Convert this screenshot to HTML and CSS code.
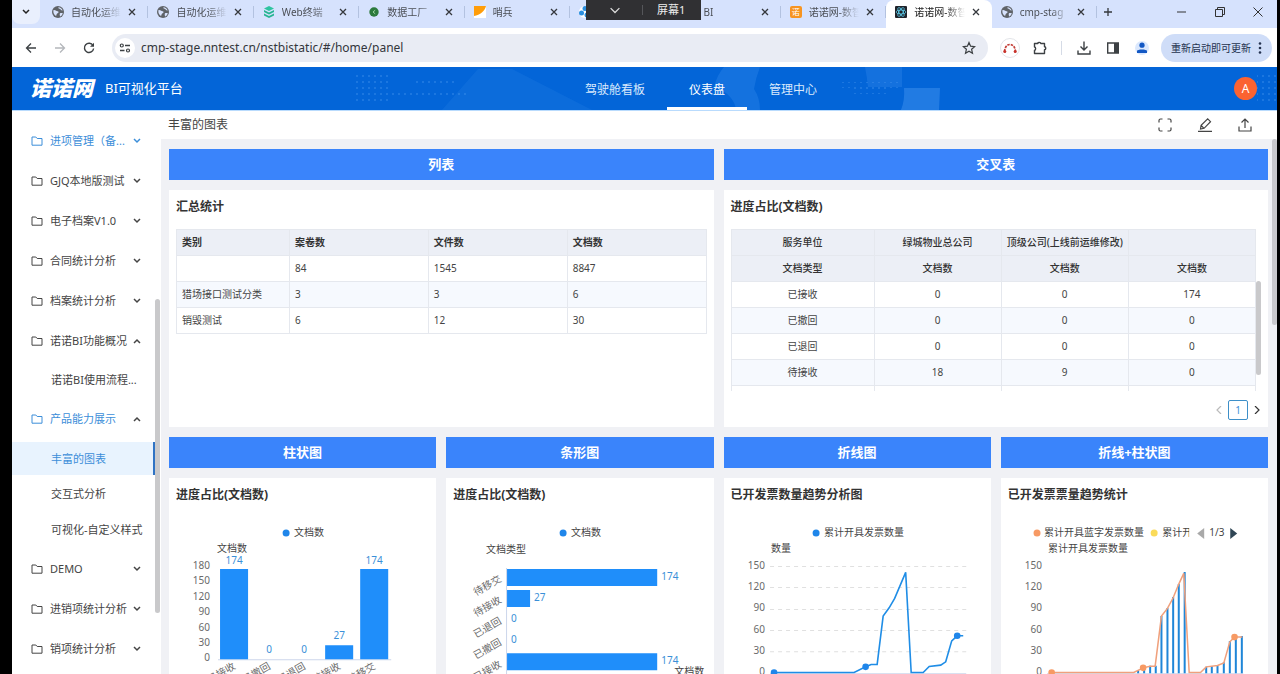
FILE: index.html
```html
<!DOCTYPE html>
<html lang="zh-CN">
<head>
<meta charset="utf-8">
<title>诺诺网-数智BI</title>
<link rel="stylesheet" href="styles.css">
</head>
<body>
<svg class="sprite" aria-hidden="true">
  <symbol id="globe" viewBox="0 0 12 12"><circle cx="6" cy="6" r="6" fill="#5f6368"/><path d="M1.4 4.2C3 3.6 4 5 5.6 5.2c1.4.2 1.2 1.6 0 2-1.200.4-.8 1.600-1.600 2.800C2.200 9 1 7 1.400 4.200zM6.500 1.200c-.6 1 .4 1.400 1.400 1.600 1 .3.6 1.800 2.800 1.700C10 2.600 8.400 1.300 6.500 1.200zM8 7.200c1-.6 2.200-.2 2.800 0-.4 1.600-1.400 2.800-2.600 3.400-.4-1-.8-2.800-.2-3.400z" fill="#d7e2fc"/></symbol>
  <symbol id="close" viewBox="0 0 8 8"><path d="M1 1l6 6M7 1L1 7" stroke="#35383d" stroke-width="1.300" fill="none"/></symbol>
  <symbol id="folder" viewBox="0 0 12 12"><path d="M1 2h3.800l1.400 1.500H11v6.700H1z" fill="none" stroke="currentColor" stroke-linejoin="round"/></symbol>
  <symbol id="down" viewBox="0 0 8 8"><path d="M1 2l3 3 3-3" fill="none" stroke="currentColor" stroke-width="1.500"/></symbol>
  <symbol id="up" viewBox="0 0 8 8"><path d="M1 6l3-3 3 3" fill="none" stroke="currentColor" stroke-width="1.500"/></symbol>
</svg>
<div class="window">
  <div class="tabstrip">
    <button class="tab-search" aria-label="搜索标签页"><svg width="8" height="8"><use href="#down"/></svg></button>
    <div class="tabs">
      <div class="tab"><svg class="fav"><use href="#globe"/></svg><span>自动化运维</span><button aria-label="关闭"><svg width="8" height="8"><use href="#close"/></svg></button></div>
      <div class="tab"><svg class="fav"><use href="#globe"/></svg><span>自动化运维</span><button aria-label="关闭"><svg width="8" height="8"><use href="#close"/></svg></button></div>
      <div class="tab"><svg class="fav" viewBox="0 0 12 12"><path d="M6 0l5 2.500L6 5 1 2.500z" fill="#2fc4a0"/><path d="M1 4l5 2.500L11 4v2L6 8.500 1 6zM1 7.500L6 10l5-2.500v2L6 12 1 9.500z" fill="#27b592"/></svg><span>Web终端</span><button aria-label="关闭"><svg width="8" height="8"><use href="#close"/></svg></button></div>
      <div class="tab"><svg class="fav" viewBox="0 0 12 12"><circle cx="6" cy="6" r="4.700" fill="#2c7a3c"/><path d="M7.200 4.200L5 6l2.200 1.800" stroke="#9bd39f" fill="none"/></svg><span>数据工厂</span><button aria-label="关闭"><svg width="8" height="8"><use href="#close"/></svg></button></div>
      <div class="tab"><svg class="fav" viewBox="0 0 12 12"><path d="M0 0h12v12H0z" fill="#fff"/><path d="M0 0h12C11 5 6 9 0 10z" fill="#ff9d0a"/></svg><span>哨兵</span><button aria-label="关闭"><svg width="8" height="8"><use href="#close"/></svg></button></div>
      <div class="tab"><svg class="fav" viewBox="0 0 12 12"><circle cx="6" cy="6" r="6" fill="#fff"/><circle cx="6" cy="2.500" r="2.500" fill="#2a8fe0"/><circle cx="2.500" cy="7" r="2.500" fill="#2a8fe0"/><circle cx="8" cy="9" r="2.500" fill="#2a8fe0"/></svg><span></span><button aria-label="关闭"><svg width="8" height="8"><use href="#close"/></svg></button></div>
      <div class="tab"><svg class="fav"><use href="#globe"/></svg><span>BI</span><button aria-label="关闭"><svg width="8" height="8"><use href="#close"/></svg></button></div>
      <div class="tab"><i class="fav fav-nuo">诺</i><span>诺诺网-数智</span><button aria-label="关闭"><svg width="8" height="8"><use href="#close"/></svg></button></div>
      <div class="tab active"><svg class="fav" viewBox="0 0 12 12"><rect width="12" height="12" rx="1" fill="#20232a"/><g fill="none" stroke="#61dafb" stroke-width=".7"><ellipse cx="6" cy="6" rx="5" ry="2"/><ellipse cx="6" cy="6" rx="5" ry="2" transform="rotate(60 6 6)"/><ellipse cx="6" cy="6" rx="5" ry="2" transform="rotate(120 6 6)"/></g></svg><span>诺诺网-数智</span><button aria-label="关闭"><svg width="8" height="8"><use href="#close"/></svg></button></div>
      <div class="tab"><svg class="fav"><use href="#globe"/></svg><span>cmp-stag</span><button aria-label="关闭"><svg width="8" height="8"><use href="#close"/></svg></button></div>
    </div>
    <button class="new-tab" aria-label="新标签页"><svg width="10" height="10" viewBox="0 0 10 10"><path d="M5 1v8M1 5h8" stroke="#35383d" stroke-width="1.300"/></svg></button>
    <div class="win-controls">
      <button aria-label="最小化"><svg width="10" height="10" viewBox="0 0 10 10"><path d="M0 5h9" stroke="#333"/></svg></button>
      <button aria-label="还原"><svg width="10" height="10" viewBox="0 0 10 10"><path d="M.5 2.500h7v7h-7zM2.500 2V.5h7v7H8" fill="none" stroke="#333"/></svg></button>
      <button aria-label="关闭窗口"><svg width="10" height="10" viewBox="0 0 10 10"><path d="M.5.5l9 9M9.500.5l-9 9" stroke="#333"/></svg></button>
    </div>
    <div class="screen-bar"><svg width="10" height="10" viewBox="0 0 8 8"><path d="M.5 2.500L4 6l3.500-3.500" fill="none" stroke="#ddd"/></svg><i></i><span>屏幕1</span></div>
  </div>

  <div class="toolbar">
    <button class="tool" aria-label="后退"><svg viewBox="0 0 12 12"><path d="M11 6H1.500M6 1.500L1.500 6 6 10.500" fill="none" stroke="#3c4043" stroke-width="1.300"/></svg></button>
    <button class="tool" aria-label="前进"><svg viewBox="0 0 12 12"><path d="M1 6h9.500M6 1.500L10.500 6 6 10.500" fill="none" stroke="#b4b7bb" stroke-width="1.300"/></svg></button>
    <button class="tool" aria-label="刷新"><svg viewBox="0 0 12 12"><path d="M10 3.500A4.600 4.600 0 1 0 10.600 6.500" fill="none" stroke="#3c4043" stroke-width="1.400"/><path d="M11 .8v4H7z" fill="#3c4043"/></svg></button>
    <div class="omnibox">
      <span class="site-info"><svg width="12" height="12" viewBox="0 0 12 12"><path d="M6 3.500h5M1 8.500h4.500" stroke="#3c4043" stroke-width="1.300"/><circle cx="2.800" cy="3.500" r="1.500" fill="none" stroke="#3c4043" stroke-width="1.200"/><circle cx="9" cy="8.500" r="1.500" fill="none" stroke="#3c4043" stroke-width="1.200"/></svg></span>
      <input type="text" aria-label="地址" value="cmp-stage.nntest.cn/nstbistatic/#/home/panel">
      <button class="star" aria-label="收藏"><svg width="14" height="14" viewBox="0 0 14 14"><path d="M7 1.500l1.600 3.700 4 .4-3 2.700.9 4L7 10.200l-3.500 2.100.9-4-3-2.700 4-.4z" fill="none" stroke="#3c4043" stroke-width="1.200"/></svg></button>
    </div>
    <button class="tool ext" aria-label="扩展"><svg viewBox="0 0 20 20"><circle cx="10" cy="10" r="9.500" fill="#fff" stroke="#e2e4e8"/><path d="M4.500 13.500C5 9 7 6.500 10 6.500s5 2.500 5.500 7" fill="none" stroke="#c33f38" stroke-width="1.700" stroke-dasharray="2.500 1"/><circle cx="4.800" cy="13.500" r="1.500" fill="#c8322b"/><circle cx="15.200" cy="13.500" r="1.500" fill="#c8322b"/></svg></button>
    <button class="tool" aria-label="扩展程序"><svg class="big" viewBox="0 0 14 14"><path d="M1.500 2.500h3.300c0-1.500 3-1.500 3 0h3.700v3.200c1.700 0 1.700 3 0 3v3.800h-10V9.300c1.500 0 1.500-3.300 0-3.300z" fill="none" stroke="#3c4043" stroke-width="1.400" stroke-linejoin="round"/></svg></button>
    <i class="divider"></i>
    <button class="tool" aria-label="下载"><svg class="big" viewBox="0 0 14 14"><path d="M7 .5v8M3.500 5.500L7 9l3.500-3.500M1 9.500V13h12V9.500" fill="none" stroke="#3c4043" stroke-width="1.400"/></svg></button>
    <button class="tool" aria-label="侧边栏"><svg viewBox="0 0 12 12"><path d="M.7 1h10.600v10H.7z" fill="none" stroke="#3c4043" stroke-width="1.400"/><path d="M7 1h4.300v10H7z" fill="#3c4043"/></svg></button>
    <button class="tool" aria-label="用户"><svg class="big" viewBox="0 0 14 14"><circle cx="7" cy="7" r="7" fill="#dbe8fd"/><circle cx="7" cy="4.200" r="2.600" fill="#1358c4"/><path d="M2 12V10c0-2 10-2 10 0v2z" fill="#1358c4"/></svg></button>
    <button class="update">重新启动即可更新<svg width="4" height="14" viewBox="0 0 4 14"><g fill="#24324f"><circle cx="2" cy="2.500" r="1.300"/><circle cx="2" cy="7" r="1.300"/><circle cx="2" cy="11.500" r="1.300"/></g></svg></button>
  </div>

  <header class="app-header">
    <svg class="header-art" viewBox="0 0 1265 43" preserveAspectRatio="xMidYMid slice" aria-hidden="true">
      <defs><pattern id="dots" width="6" height="6" patternUnits="userSpaceOnUse"><circle cx="3" cy="3" r="1" fill="#57a0f2"/></pattern></defs>
      <path d="M430 43L466 2l34 0 80 41z" fill="#1b78e0" opacity=".4"/>
      <path d="M702 20q3-12 10-20h36q-4 10-6 22 6 9 6 21h-24q-2-16-22-23z" fill="#2680e6" opacity=".5"/>
      <path d="M853 0h37v20h-34q-1-10-3-20z" fill="#1f7ae2" opacity=".6"/>
      <path d="M892 21h36l-1 22h-38q4-10 3-22z" fill="#2f85e8" opacity=".7"/>
      <g opacity=".4"><path d="M340 6h36v30h-36zM376 24h78v8h-78zM402 12h40v6h-40zM826 15h64v6h-64zM838 21h40v6h-40zM1245 6h20v30h-20z" fill="url(#dots)"/></g>
    </svg>
    <div class="brand"><strong>诺诺网</strong><span>BI可视化平台</span></div>
    <nav><a href="#cockpit">驾驶舱看板</a><a href="#panel" class="on">仪表盘</a><a href="#manage">管理中心</a></nav>
    <button class="avatar">A</button>
  </header>

  <div class="app-body">
    <aside>
      <ul class="menu">
        <li class="blue"><a href="#m1"><svg><use href="#folder"/></svg>进项管理（备...<svg class="arrow"><use href="#down"/></svg></a></li>
        <li><a href="#m2"><svg><use href="#folder"/></svg>GJQ本地版测试<svg class="arrow"><use href="#down"/></svg></a></li>
        <li><a href="#m3"><svg><use href="#folder"/></svg>电子档案V1.0<svg class="arrow"><use href="#down"/></svg></a></li>
        <li><a href="#m4"><svg><use href="#folder"/></svg>合同统计分析<svg class="arrow"><use href="#down"/></svg></a></li>
        <li><a href="#m5"><svg><use href="#folder"/></svg>档案统计分析<svg class="arrow"><use href="#down"/></svg></a></li>
        <li><a href="#m6"><svg><use href="#folder"/></svg>诺诺BI功能概况<svg class="arrow"><use href="#up"/></svg></a>
          <ul><li><a href="#s1">诺诺BI使用流程...</a></li></ul></li>
        <li class="blue-label"><a href="#m7"><svg><use href="#folder"/></svg>产品能力展示<svg class="arrow"><use href="#up"/></svg></a>
          <ul><li class="current"><a href="#s2">丰富的图表</a></li><li><a href="#s3">交互式分析</a></li><li><a href="#s4">可视化-自定义样式</a></li></ul></li>
        <li><a href="#m8"><svg><use href="#folder"/></svg>DEMO<svg class="arrow"><use href="#down"/></svg></a></li>
        <li><a href="#m9"><svg><use href="#folder"/></svg>进销项统计分析<svg class="arrow"><use href="#down"/></svg></a></li>
        <li><a href="#m10"><svg><use href="#folder"/></svg>销项统计分析<svg class="arrow"><use href="#down"/></svg></a></li>
      </ul>
      <i class="menu-thumb"></i>
    </aside>

    <main>
      <div class="page-title">
        <h1>丰富的图表</h1>
        <button aria-label="全屏"><svg viewBox="0 0 14 14"><path d="M1 4.500V2.500Q1 1 2.500 1h2M9.500 1h2Q13 1 13 2.500v2M13 9.500v2q0 1.500-1.500 1.500h-2M4.500 13h-2Q1 13 1 11.500v-2"/></svg></button>
        <button aria-label="编辑"><svg viewBox="0 0 14 14"><path d="M0 13.400h14M2.500 11l.6-3.600L9.700.9l2.800 2.800-6.400 6.600zM3.200 7.500l2.800 2.800"/></svg></button>
        <button aria-label="导出"><svg viewBox="0 0 14 14"><path d="M7 10V1.200M3.500 4.500L7 1l3.500 3.500M1 8.500V13h12V8.500"/></svg></button>
      </div>
      <div class="scroll">
        <div class="board">
          <h2 class="wide">列表</h2>
          <h2 class="wide">交叉表</h2>
          <section class="card wide">
            <h3>汇总统计</h3>
            <table class="list">
              <colgroup><col class="c-first"><col><col><col></colgroup>
              <thead><tr><th>类别</th><th>案卷数</th><th>文件数</th><th>文档数</th></tr></thead>
              <tbody>
                <tr><td></td><td>84</td><td>1545</td><td>8847</td></tr>
                <tr><td>猎场接口测试分类</td><td>3</td><td>3</td><td>6</td></tr>
                <tr><td>销毁测试</td><td>6</td><td>12</td><td>30</td></tr>
              </tbody>
            </table>
          </section>
          <section class="card wide">
            <h3>进度占比(文档数)</h3>
            <div class="cross-wrap">
              <table class="cross">
                <colgroup><col class="c-wide"><col><col><col></colgroup>
                <thead>
                  <tr><th>服务单位</th><th>绿城物业总公司</th><th>顶级公司(上线前运维修改)</th><th></th></tr>
                  <tr><th>文档类型</th><th>文档数</th><th>文档数</th><th>文档数</th></tr>
                </thead>
                <tbody>
                  <tr><td>已接收</td><td>0</td><td>0</td><td>174</td></tr>
                  <tr><td>已撤回</td><td>0</td><td>0</td><td>0</td></tr>
                  <tr><td>已退回</td><td>0</td><td>0</td><td>0</td></tr>
                  <tr><td>待接收</td><td>18</td><td>9</td><td>0</td></tr>
                  <tr><td></td><td></td><td></td><td></td></tr>
                </tbody>
              </table>
              <i class="cross-thumb"></i>
            </div>
            <div class="pager"><button disabled aria-label="上一页"><svg viewBox="0 0 8 8"><path d="M6 0L2 4l4 4"/></svg></button><button class="num">1</button><button aria-label="下一页"><svg viewBox="0 0 8 8"><path d="M2 0l4 4-4 4"/></svg></button></div>
          </section>

          <h2>柱状图</h2><h2>条形图</h2><h2>折线图</h2><h2>折线+柱状图</h2>

          <section class="card">
            <h3>进度占比(文档数)</h3>
            <svg class="chart" viewBox="0 0 253 190">
              <circle cx="110" cy="16" r="3.500" fill="#1f86ea"/><text x="118" y="19">文档数</text><text x="41" y="35">文档数</text>
              <g class="axis"><text x="34" y="52">180</text><text x="34" y="67">150</text><text x="34" y="83">120</text><text x="34" y="98">90</text><text x="34" y="114">60</text><text x="34" y="129">30</text><text x="34" y="144">0</text></g>
              <path d="M42 142.500h173" stroke="#ccd6eb"/>
              <path d="M44 52h28v90H44zM149 128h28v14h-28zM184 52h28v90h-28z" fill="#1f8efa"/>
              <g class="val mid"><text x="58" y="47">174</text><text x="93" y="136">0</text><text x="128" y="136">0</text><text x="163" y="122">27</text><text x="198" y="47">174</text></g>
              <g class="axis"><text transform="translate(60 151) rotate(-30)">已接收</text><text transform="translate(95 151) rotate(-30)">已撤回</text><text transform="translate(130 151) rotate(-30)">已退回</text><text transform="translate(165 151) rotate(-30)">待接收</text><text transform="translate(200 151) rotate(-30)">待移交</text></g>
            </svg>
          </section>

          <section class="card">
            <h3>进度占比(文档数)</h3>
            <svg class="chart" viewBox="0 0 253 190">
              <circle cx="110" cy="16" r="3.500" fill="#1f86ea"/><text x="118" y="19">文档数</text><text x="33" y="36">文档类型</text>
              <path d="M53.500 51v120" stroke="#ccd6eb"/>
              <path d="M54 52h150v17H54zM54 73h23v17H54zM54 136h150v17H54z" fill="#1f8efa"/>
              <g class="val"><text x="208" y="63">174</text><text x="81" y="84">27</text><text x="58" y="105">0</text><text x="58" y="126">0</text><text x="208" y="147">174</text></g>
              <text x="221" y="158">文档数</text>
              <g class="axis"><text transform="translate(49 64) rotate(-30)">待移交</text><text transform="translate(49 85) rotate(-30)">待接收</text><text transform="translate(49 106) rotate(-30)">已退回</text><text transform="translate(49 127) rotate(-30)">已撤回</text><text transform="translate(49 149) rotate(-30)">已接收</text></g>
            </svg>
          </section>

          <section class="card">
            <h3>已开发票数量趋势分析图</h3>
            <svg class="chart" viewBox="0 0 253 190">
              <circle cx="85" cy="16" r="3.500" fill="#1f86ea"/><text x="93" y="19">累计开具发票数量</text><text x="40" y="35">数量</text>
              <g class="axis"><text x="34" y="52">150</text><text x="34" y="73">120</text><text x="34" y="94">90</text><text x="34" y="116">60</text><text x="34" y="137">30</text><text x="34" y="158">0</text></g>
              <path d="M39 49.500h196M39 70.500h196M39 92.500h196M39 113.500h196M39 134.500h196" stroke="#e0e0e0" stroke-dasharray="4 4"/>
              <path d="M39 156.500h196" stroke="#ccd6eb"/>
              <path d="M43 155.300H123L134.500 149.700L140 147.300H146L152 99L158 90.700L163.500 81.300L174.500 55.300L180 155.300H192L198 149.300L209.500 148L214.500 144.700L220.500 123.700L226 118.700H232" fill="none" stroke="#1f8de6" stroke-width="1.600"/>
              <g fill="#1f86ea"><circle cx="43" cy="155.300" r="3.300"/><circle cx="134.500" cy="149.700" r="3.300"/><circle cx="226" cy="118.700" r="3.300"/></g>
            </svg>
          </section>

          <section class="card">
            <h3>已开发票票量趋势统计</h3>
            <svg class="chart" viewBox="0 0 253 190">
              <defs><clipPath id="legend-page"><path d="M0 0h181v30H0z"/></clipPath></defs>
              <circle cx="29" cy="16" r="3.500" fill="#f79a64"/><text x="36" y="19">累计开具蓝字发票数量</text>
              <g clip-path="url(#legend-page)"><circle cx="146" cy="16" r="3.500" fill="#fadb5a"/><text x="154" y="19">累计开</text></g>
              <path d="M196 11v11l-7-5.500z" fill="#a9a9a9"/><text x="201" y="19">1/3</text><path d="M222 11v11l7-5.500z" fill="#2f4554"/>
              <text x="40" y="35">累计开具发票数量</text>
              <g class="axis"><text x="34" y="52">150</text><text x="34" y="73">120</text><text x="34" y="94">90</text><text x="34" y="116">60</text><text x="34" y="137">30</text><text x="34" y="158">0</text></g>
              <path d="M39 156.500h196" stroke="#ccd6eb"/>
              <path d="M130 153v3M136 150v6M142 148.500v7.500M147.600 148.500v7.500M153.300 99v57M159.300 91v65M165 80v76M170.600 67v89M176.500 55v101M198 149.500v6.500M203.600 149v7M209.300 148.300v7.700M215.600 145v11M221.600 124v32M227.600 120v36M233.600 119v37" stroke="#1f86d8" stroke-width="2"/>
              <path d="M43.600 155.300H125.600L135 150.700L142 149H147L153.300 99L159.300 91.300L165 80.700L170.600 67L175.600 56.300L181 155.300H192.300L198 149.700L209.300 148.300L215.600 145.700L221.600 124.700L226.300 120H234" fill="none" stroke="#f0a07c" stroke-width="1.500"/>
              <g fill="#f79a64"><circle cx="43.600" cy="155.300" r="3.300"/><circle cx="135" cy="150.700" r="3.300"/><circle cx="226.300" cy="120" r="3.300"/></g>
            </svg>
          </section>
        </div>
        <i class="page-thumb"></i>
      </div>
    </main>
  </div>
</div>
</body>
</html>
```
FILE: styles.css
```css
* { box-sizing: border-box; }
html, body { height: 100%; }
body {
  margin: 0;
  padding: 0 3px 0 12px;
  background: #000;
  color: #444;
  font: 12px/18px "Noto Sans", "Noto Sans CJK SC", sans-serif;
  overflow: hidden;
}
h1, h2, h3, ul { margin: 0; padding: 0; }
ul { list-style: none; }
a { color: inherit; text-decoration: none; }
button, input { margin: 0; padding: 0; border: 0; background: none; font: inherit; color: inherit; }
button { display: inline-flex; align-items: center; justify-content: center; }
i { font-style: normal; }
svg { display: block; flex: none; }
.sprite { position: absolute; width: 0; height: 0; }
.window { height: 100vh; display: flex; flex-direction: column; background: #fff; overflow: hidden; }

/* Tab strip */
.tabstrip { position: relative; display: flex; flex: none; height: 28px; background: #d6e2fd; font-size: 10px; color: #4b4f56; }
.tab-search { width: 28px; height: 24px; margin-right: 3px; border-radius: 0 0 8px 8px; background: #e9effd; color: #222; }
.tabs { display: flex; flex: 1; min-width: 0; }
.tab { position: relative; display: flex; flex: 1 1 0; min-width: 0; align-items: center; height: 24px; padding: 0 12px 0 9px; gap: 7px; }
.tab::after { content: ""; position: absolute; right: 0; top: 6px; height: 12px; border-right: 1px solid #b3c2e0; }
.tab span { flex: 1; min-width: 0; overflow: hidden; white-space: nowrap; -webkit-mask-image: linear-gradient(90deg, #000 60%, transparent); mask-image: linear-gradient(90deg, #000 60%, transparent); }
.tab.active { height: 28px; padding-bottom: 4px; background: #fff; border-radius: 8px 8px 0 0; color: #222; }
.tab.active::after { display: none; }
.fav { width: 12px; height: 12px; flex: none; }
.fav-nuo { border-radius: 2px; background: #f79420; color: #fff; font-size: 8px; line-height: 12px; text-align: center; }
.new-tab { width: 22px; height: 24px; }
.win-controls { display: flex; width: 114px; height: 24px; margin-left: 44px; }
.win-controls button { flex: 1; }
.screen-bar { position: absolute; left: 574px; top: 0; display: flex; align-items: center; width: 115px; height: 20px; padding-left: 24px; background: #303033; color: #eee; font-size: 11px; }
.screen-bar i { height: 10px; margin: 0 14px 0 22px; border-left: 1px solid #55565a; }

/* Browser toolbar */
.toolbar { display: flex; flex: none; align-items: center; height: 39px; padding: 0 5px 0 4px; background: #fff; }
.tool { width: 29px; height: 28px; flex: none; }
.tool svg { width: 12px; height: 12px; }
.tool svg.big { width: 14px; height: 14px; }
.tool.ext { width: 30px; }
.tool.ext svg { width: 20px; height: 20px; }
.divider { height: 14px; margin: 0 7px; border-left: 1px solid #d5dbe6; }
.omnibox { display: flex; flex: 1; align-items: center; min-width: 0; height: 28px; margin: 0 7px 0 9px; padding: 0 12px 0 3px; border-radius: 14px; background: #e9ecf4; }
.site-info { display: flex; align-items: center; justify-content: center; width: 20px; height: 20px; margin-right: 6px; border-radius: 10px; background: #fff; }
.omnibox input { flex: 1; min-width: 0; color: #33363b; }
.update { gap: 7px; height: 28px; margin-left: 5px; padding: 0 10px; border-radius: 14px; background: #cfddf8; color: #24324f; font-size: 10px; }

/* Application header */
.app-header { position: relative; display: grid; grid-template-columns: 551fr auto 438fr; flex: none; height: 43px; background: #0365d8; color: #fff; }
.header-art { position: absolute; inset: 0; width: 100%; height: 100%; }
.brand, .app-header nav, .avatar { position: relative; }
.brand { display: flex; align-items: center; gap: 12px; padding-left: 18px; font-size: 13px; line-height: 20px; }
.brand span { padding-bottom: 2px; }
.brand strong { font-size: 21px; font-weight: 900; font-style: italic; line-height: 43px; }
.app-header nav { display: flex; line-height: 46px; }
.app-header nav a { height: 43px; padding: 0 22px; color: #d9e9fc; }
.app-header nav a.on { border-bottom: 3px solid #fff; color: #fff; }
.avatar { justify-self: end; align-self: center; width: 23px; height: 23px; margin-right: 20px; border-radius: 50%; background: #fb6331; color: #fff; }

/* Side menu */
.app-body { display: flex; flex: 1; min-height: 0; border-top: 1px solid #b9dbfd; }
aside { position: relative; width: 149px; flex: none; padding: 10px 6px 0 0; overflow: hidden; background: #fff; font-size: 11px; }
.menu a { display: flex; align-items: center; height: 40px; padding: 0 14px 0 19px; white-space: nowrap; }
.menu svg { width: 12px; height: 12px; margin-right: 7px; }
.menu svg.arrow { width: 8px; height: 8px; margin: 0 0 0 auto; }
.menu ul { padding: 1px 0; }
.menu ul a { height: 36px; padding: 0 0 0 39px; }
.menu .blue, .menu .blue-label > a, .menu .current { color: #3c8ed9; }
.menu .blue-label .arrow { color: #444; }
.menu ul .current a { height: 33px; margin: 2px 0 1px; background: #e8f3fe; border-right: 2px solid #2f73c4; }
.menu-thumb { position: absolute; right: 1px; top: 188px; width: 5px; height: 314px; border-radius: 3px; background: #c9c9cb; }

/* Page */
main { display: flex; flex: 1; flex-direction: column; min-width: 0; }
.page-title { display: flex; flex: none; align-items: center; gap: 20px; height: 28px; padding: 0 22px 0 7px; }
.page-title h1 { flex: 1; font-size: 12px; font-weight: 400; }
.page-title button { width: 20px; height: 20px; }
.page-title svg { width: 14px; height: 14px; fill: none; stroke: #444; stroke-width: 1.2; }
.scroll { position: relative; flex: 1; min-height: 0; overflow: hidden; background: #f0f1f5; }
.page-thumb { position: absolute; right: 0; top: 0; width: 5px; height: 186px; border-radius: 3px; background: #c9c9cd; }
.board { display: grid; grid-template-columns: repeat(4, minmax(0, 1fr)); gap: 10px; padding: 10px 9px 10px 8px; }
.wide { grid-column: span 2; }
.board h2 { background: #3a84fb; color: #fff; font-size: 13px; font-weight: 700; line-height: 31px; text-align: center; }
.card { min-height: 237px; padding: 7px; background: #fff; }
.card h3 { height: 32px; font-size: 12px; line-height: 20px; font-weight: 700; color: #333; white-space: nowrap; }

/* Tables */
table { width: 100%; border-collapse: collapse; table-layout: fixed; font-size: 10px; line-height: 15px; }
th, td { height: 26px; padding: 0 5px 1px; border: 1px solid #e5e8ee; white-space: nowrap; }
th { background: #eceff6; color: #333; font-weight: 700; }
.list th, .list td { text-align: left; }
.list tbody tr:nth-child(even), .cross tbody tr:nth-child(even) { background: #f6f9fe; }
.c-first { width: 113px; }
.c-wide { width: 143px; }
.cross-wrap { position: relative; height: 162px; padding-right: 5px; overflow: hidden; }
.cross th, .cross td { text-align: center; }
.cross th { font-weight: 500; }
.cross-thumb { position: absolute; right: 0; top: 52px; width: 5px; height: 94px; border-radius: 3px; background: #c9c9cb; }
.pager { display: flex; align-items: center; justify-content: flex-end; gap: 5px; margin-top: 9px; }
.pager svg { width: 8px; height: 8px; fill: none; stroke: #333; stroke-width: 1.2; }
.pager button:disabled svg { stroke: #bbb; }
.pager .num { width: 20px; height: 20px; border: 1px solid #3d8fc8; border-radius: 2px; color: #3d8fd8; font-size: 10px; }

/* Charts */
.chart { width: 100%; height: auto; }
.chart text { font-size: 10px; fill: #444; }
.chart .axis text { fill: #6a6a6a; text-anchor: end; }
.chart .val text { fill: #3a90d8; }
.chart .mid text { text-anchor: middle; }
```
